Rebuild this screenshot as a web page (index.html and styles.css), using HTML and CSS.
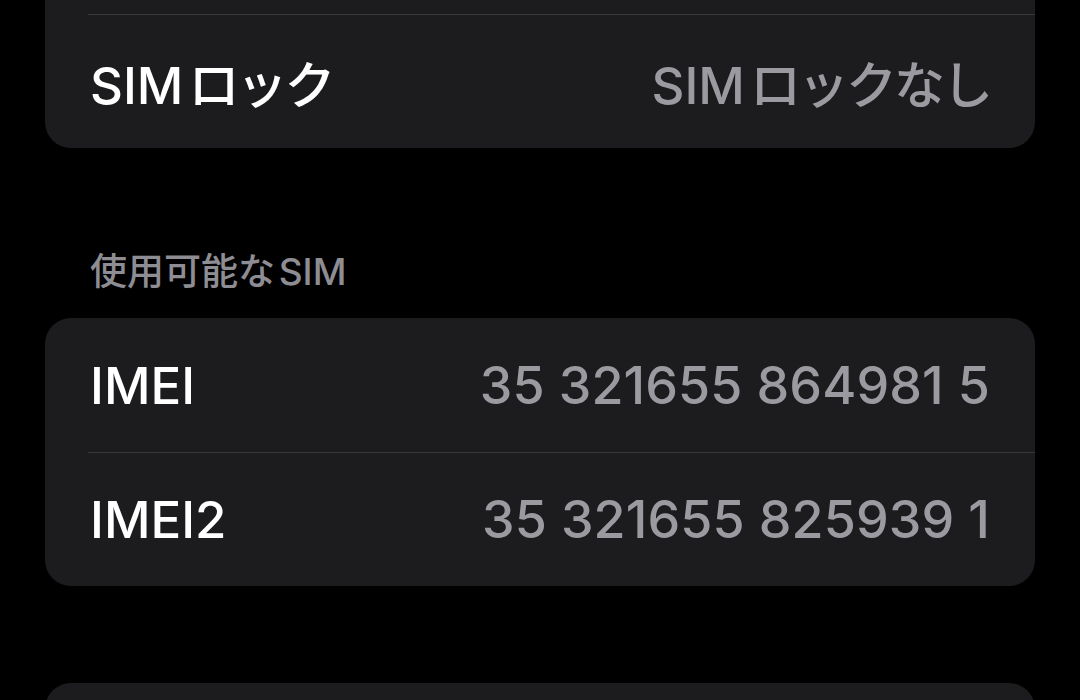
FILE: index.html
```html
<!DOCTYPE html>
<html lang="ja">
<head>
    <meta charset="UTF-8">
    <meta name="viewport" content="width=device-width, initial-scale=1.0">
    <title>情報</title>
    <link rel="stylesheet" href="styles.css">
</head>
<body>
    <div class="page">
        <!-- 上のグループ（画面外に続く） -->
        <div class="group group-top">
            <div class="row"></div>
            <div class="row">
                <span class="label"><span class="gap">SIM</span><span class="kana">ロック</span></span>
                <span class="value"><span class="gap">SIM</span><span class="kana">ロックなし</span></span>
            </div>
        </div>

        <div class="section-title"><span class="gap">使用可能な</span>SIM</div>
        <div class="group">
            <div class="row">
                <span class="label">IMEI</span>
                <span class="value num">35 321655 864981 5</span>
            </div>
            <div class="row">
                <span class="label">IMEI2</span>
                <span class="value num">35 321655 825939 1</span>
            </div>
        </div>

        <div class="group group-next">
            <div class="row"></div>
        </div>
    </div>
</body>
</html>
```

FILE: styles.css
```css
* {
    margin: 0;
    padding: 0;
    box-sizing: border-box;
}

body {
    font-family: 'Inter', 'Noto Sans CJK JP', sans-serif;
    background-color: #000000;
    color: #ffffff;
    overflow: hidden;
}

.page {
    padding: 0 45px;
}

.group {
    background-color: #1c1c1e;
    border-radius: 26px;
}

.group-top {
    margin-top: -120px;
}

.group-next {
    margin-top: 97px;
}

.row {
    height: 134px;
    margin-left: 43px;
    padding: 0 45px 0 2px;
    display: flex;
    align-items: center;
    justify-content: space-between;
    font-size: 51px;
}

.row + .row {
    border-top: 1.5px solid #38383a;
}

.label {
    font-weight: 500;
    color: #ffffff;
}

.value {
    font-weight: 500;
    color: #9a9aa0;
}

.num {
    font-size: 52px;
    letter-spacing: 0.1px;
}

/* 英字と仮名の間のすき間 */
.gap {
    margin-right: 0.1em;
}

.kana {
    letter-spacing: -3px;
}

.section-title {
    margin-top: 102px;
    margin-bottom: 24px;
    padding-left: 45px;
    font-size: 37px;
    line-height: 44px;
    font-weight: 500;
    color: #8d8d93;
}
```
